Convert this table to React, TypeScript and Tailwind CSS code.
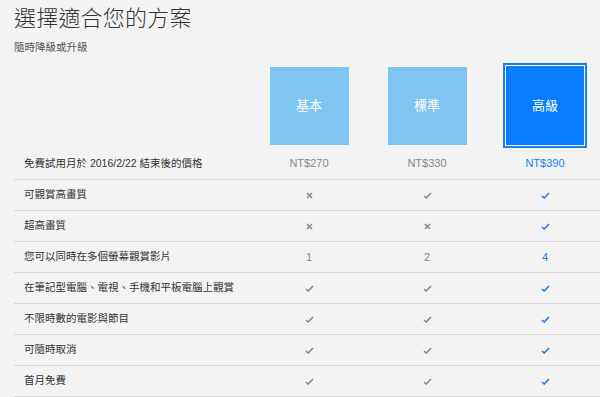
import { Fragment } from 'react';

type Cell = 'yes' | 'no' | string;

const rows: { label: string; cells: [Cell, Cell, Cell] }[] = [
    { label: '可觀賞高畫質', cells: ['no', 'yes', 'yes'] },
    { label: '超高畫質', cells: ['no', 'no', 'yes'] },
    { label: '您可以同時在多個螢幕觀賞影片', cells: ['1', '2', '4'] },
    { label: '在筆記型電腦、電視、手機和平板電腦上觀賞', cells: ['yes', 'yes', 'yes'] },
    { label: '不限時數的電影與節目', cells: ['yes', 'yes', 'yes'] },
    { label: '可隨時取消', cells: ['yes', 'yes', 'yes'] },
    { label: '首月免費', cells: ['yes', 'yes', 'yes'] },
];

function Check({ active }: { active: boolean }) {
    return (
        <svg width="9" height="7" viewBox="0 0 9 7" className={active ? 'text-[#1a7ff5]' : 'text-[#888888]'}>
            <path d="M1 4 L3.2 6 L8 1" fill="none" stroke="currentColor" strokeWidth="1.6" />
        </svg>
    );
}

function Cross() {
    return (
        <svg width="7" height="7" viewBox="0 0 7 7" className="text-[#888888]">
            <path d="M1 1 L6 6 M6 1 L1 6" fill="none" stroke="currentColor" strokeWidth="1.5" />
        </svg>
    );
}

function CellValue({ value, active }: { value: Cell; active: boolean }) {
    if (value === 'yes') return <Check active={active} />;
    if (value === 'no') return <Cross />;
    return <span className={active ? 'text-[#1a7ff5]' : 'text-[#888888]'}>{value}</span>;
}

export default function App() {
    return (
        <main
            className="w-[600px] h-[397px] overflow-hidden bg-[#f3f3f3] text-[#333333]"
            style={{ fontFamily: '"Liberation Sans", "Noto Sans CJK TC", sans-serif' }}
        >
            <div className="pl-[14px] pt-[5px]">
                <h1 className="text-[22px] leading-[28px] font-light tracking-[0.2px]">選擇適合您的方案</h1>
                <p className="mt-[7px] text-[10.5px] leading-[14px] text-[#555555]">隨時降級或升級</p>
            </div>

            <div className="ml-[14px] grid grid-cols-[236px_118px_118px_118px]">
                {/* plan boxes */}
                <div className="h-[94px]" />
                <div className="flex items-center justify-center pt-[9px]">
                    <div className="w-[79px] h-[78px] bg-[#80c4f2] flex items-center justify-center text-white text-[13px]">基本</div>
                </div>
                <div className="flex items-center justify-center pt-[9px]">
                    <div className="w-[79px] h-[78px] bg-[#80c4f2] flex items-center justify-center text-white text-[13px]">標準</div>
                </div>
                <div className="flex items-center justify-center pt-[9px]">
                    <div className="w-[84px] h-[85px] border-2 border-[#1a7ff5] bg-white p-px">
                        <div className="w-full h-full bg-[#0a7cff] flex items-center justify-center text-white text-[13px]">高級</div>
                    </div>
                </div>

                {/* price row */}
                <div className="h-[32px] border-b border-[#d8d8d8] flex items-center pl-[10px] text-[10.5px]">
                    免費試用月於 2016/2/22 結束後的價格
                </div>
                <div className="h-[32px] border-b border-[#d8d8d8] flex items-center justify-center text-[11px] text-[#888888]">NT$270</div>
                <div className="h-[32px] border-b border-[#d8d8d8] flex items-center justify-center text-[11px] text-[#888888]">NT$330</div>
                <div className="h-[32px] border-b border-[#d8d8d8] flex items-center justify-center text-[11px] text-[#1a7ff5]">NT$390</div>

                {rows.map((row) => (
                    <Fragment key={row.label}>
                        <div className="h-[31px] border-b border-[#d8d8d8] flex items-center pl-[10px] text-[10.5px]">
                            {row.label}
                        </div>
                        {row.cells.map((c, i) => (
                            <div key={i} className="h-[31px] border-b border-[#d8d8d8] flex items-center justify-center text-[11px]">
                                <CellValue value={c} active={i === 2} />
                            </div>
                        ))}
                    </Fragment>
                ))}
            </div>
        </main>
    );
}
